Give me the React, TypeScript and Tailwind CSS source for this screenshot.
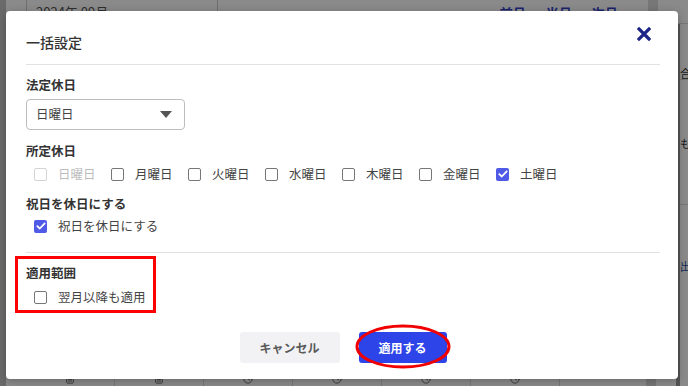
import React from 'react'
import { Clock, FileText } from 'lucide-react'

const font = { fontFamily: '"Noto Sans CJK JP", "Noto Sans", sans-serif' }

function Box({ checked = false, disabled = false }: { checked?: boolean; disabled?: boolean }) {
  if (checked) {
    return (
      <span className="w-[13px] h-[13px] rounded-[2px] bg-[#4f5ae6] flex items-center justify-center shrink-0">
        <svg width="10" height="8" viewBox="0 0 10 8">
          <path d="M1.3 4.2 L3.8 6.5 L8.7 1.4" fill="none" stroke="#fff" strokeWidth="1.8" strokeLinecap="round" strokeLinejoin="round" />
        </svg>
      </span>
    )
  }
  return (
    <span
      className={`w-[13px] h-[13px] rounded-[2px] border-[1.5px] shrink-0 ${disabled ? 'border-[#d4d4d4]' : 'border-[#777]'}`}
    />
  )
}

function Check({ label, checked, disabled }: { label: string; checked?: boolean; disabled?: boolean }) {
  return (
    <div className="flex items-center gap-[11px] h-[18px] mr-[16px]">
      <Box checked={checked} disabled={disabled} />
      <span className={`text-[12.5px] leading-[18px] w-[37px] whitespace-nowrap ${disabled ? 'text-[#bdbdbd]' : 'text-[#444]'}`}>{label}</span>
    </div>
  )
}

function Single({ label, checked }: { label: string; checked?: boolean }) {
  return (
    <div className="flex items-center gap-[11px] h-[18px] ml-2">
      <Box checked={checked} />
      <span className="text-[12.5px] leading-[18px] text-[#444] whitespace-nowrap">{label}</span>
    </div>
  )
}

const days = ['日曜日', '月曜日', '火曜日', '水曜日', '木曜日', '金曜日', '土曜日']

export default function App() {
  return (
    <div className="relative w-[688px] h-[386px] overflow-hidden bg-white" style={font}>
      {/* underlying page */}
      <div className="flex h-full">
        <div className="w-[6px] bg-[#c4c4c4]" />
        <div className="flex-1 flex flex-col">
          <div className="flex h-[24px] border-b border-[#ddd]">
            <div className="w-[20px]" />
            <div className="w-[192px] border-l border-r border-[#ccc] pl-[9px] text-[13px] text-[#555] leading-[24px]">2024年 09月</div>
            <div className="flex-1 flex justify-end items-start gap-[20px] pr-[23px] text-[13px] font-bold text-[#3341c9] leading-[26px]">
              <span>‹ 前月</span>
              <span>当月</span>
              <span>次月 ›</span>
            </div>
            <div className="w-[10px] bg-[#ddd]" />
            <div className="w-[30px]" />
          </div>
          <div className="flex-1 flex">
            <div className="flex-1 flex flex-col">
              <div className="flex-1" />
              <div className="flex h-[16px] border-t border-[#ddd] text-[#555]">
                <div className="w-[20px]" />
                {[FileText, FileText, Clock, Clock, Clock, Clock].map((I, i) => (
                  <div key={i} className="w-[89px] border-r border-[#ddd] flex justify-center pt-[3px]">
                    <I size={10} />
                  </div>
                ))}
                <div className="flex-1" />
              </div>
            </div>
            <div className="w-[10px] bg-[#ddd]" />
            <div className="w-[20px]" />
            <div className="w-[4px] bg-[#999]" />
            <div className="w-[8px] flex flex-col text-[11px] text-[#333] leading-none overflow-hidden">
              <div className="h-[56px] pt-[44px] border-b border-[#ddd]">合</div>
              <div className="h-[125px] pt-[58px] border-b border-[#ddd]">も</div>
              <div className="pt-[56px] text-[#1f4fa0]">出</div>
            </div>
          </div>
        </div>
      </div>

      {/* dim overlay */}
      <div className="absolute inset-0 bg-black/[0.46]" />

      {/* modal */}
      <div className="absolute left-[6px] top-[11px] w-[672px] h-[368px] bg-white rounded-[4px] shadow-[0_2px_8px_rgba(0,0,0,0.25)] pl-5 pr-[18px] flex flex-col">
        <div className="flex items-start justify-between pt-[16px]">
          <h2 className="mt-[5px] text-[14px] leading-[20px] font-medium text-[#333]">一括設定</h2>
          <svg width="14" height="14" viewBox="0 0 14 14" className="mr-[9px]">
            <path d="M2 2 L12 12 M12 2 L2 12" stroke="#1e2685" strokeWidth="3.2" strokeLinecap="square" />
          </svg>
        </div>
        <div className="mt-[12px] border-t border-[#e2e2e2]" />

        <div className="mt-[11px] text-[12.5px] leading-[18px] font-bold text-[#333]">法定休日</div>
        <div className="mt-[5px] w-[159px] h-[31px] border border-[#bdbdbd] rounded-[4px] flex items-center justify-between pl-[9px] pr-[12px]">
          <span className="text-[12.5px] text-[#444]">日曜日</span>
          <svg width="12" height="7" viewBox="0 0 12 7">
            <path d="M0 0 L12 0 L6 7 Z" fill="#555" />
          </svg>
        </div>

        <div className="mt-[12px] text-[12.5px] leading-[18px] font-bold text-[#333]">所定休日</div>
        <div className="mt-[5px] ml-2 flex">
          {days.map((d, i) => (
            <Check key={d} label={d} disabled={i === 0} checked={i === 6} />
          ))}
        </div>

        <div className="mt-[12px] text-[12.5px] leading-[18px] font-bold text-[#333]">祝日を休日にする</div>
        <div className="mt-[4px]">
          <Single label="祝日を休日にする" checked />
        </div>

        <div className="mt-[17px] border-t border-[#e2e2e2]" />

        <div className="mt-[3px] -ml-[11px] w-[141px] h-[57px] border-[3px] border-[#ff0000] pl-[8px] pt-[5px]">
          <div className="text-[12.5px] leading-[18px] font-bold text-[#333]">適用範囲</div>
          <div className="mt-[6px]">
            <Single label="翌月以降も適用" />
          </div>
        </div>

        <div className="mt-[19px] flex justify-center gap-[19px]">
          <button className="w-[100px] h-[31px] rounded-[3px] bg-[#f2f2f5] text-[12px] font-bold text-[#5a5a5a]">キャンセル</button>
          <div className="relative">
            <button className="w-[88px] h-[31px] rounded-[3px] bg-[#2c44e8] text-[12px] font-bold text-white">適用する</button>
            <svg className="absolute left-[-4px] top-[-8px]" width="96" height="45" viewBox="0 0 96 45">
              <ellipse cx="48" cy="22.5" rx="46" ry="20.5" fill="none" stroke="#f00000" strokeWidth="3" />
            </svg>
          </div>
        </div>
      </div>
    </div>
  )
}
